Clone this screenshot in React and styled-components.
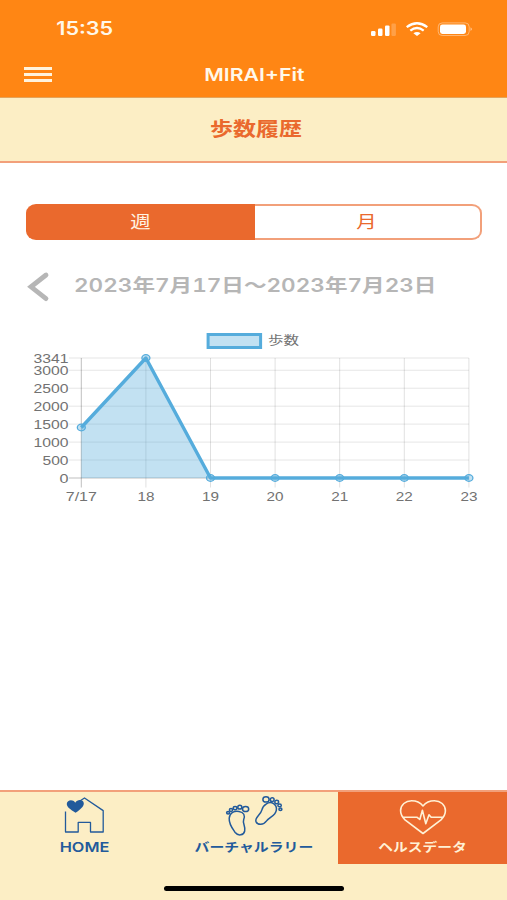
import React, { useState } from 'react';
import styled, { createGlobalStyle } from 'styled-components';

const COLORS = {
    header: '#ff8614',
    accent: '#ea692d',
    cream: '#fceec5',
    line: '#f2a07a',
    navy: '#225a9b',
    muted: '#b6b6b6',
    chart: '#55acdc',
    chartFill: 'rgba(85, 172, 220, 0.36)',
};

const STEPS = [
    { label: '7/17', value: 1406 },
    { label: '18', value: 3341 },
    { label: '19', value: 0 },
    { label: '20', value: 0 },
    { label: '21', value: 0 },
    { label: '22', value: 0 },
    { label: '23', value: 0 },
];

const TICKS = [
    { value: 3341, width: 35 },
    { value: 3000, width: 35 },
    { value: 2500, width: 35 },
    { value: 2000, width: 35 },
    { value: 1500, width: 35 },
    { value: 1000, width: 35 },
    { value: 500, width: 26 },
    { value: 0, width: 9 },
];

const CHART = { left: 81.3, top: 28, bottom: 148, step: 64.6, max: 3341 };

const px = index => CHART.left + index * CHART.step;
const py = value => CHART.bottom - (value / CHART.max) * (CHART.bottom - CHART.top);

const StatusBar = () => (
    <Status>
        <Wide $size={18} $weight={600} $stretch={1.2}>15:35</Wide>
        <StatusIcons width="104" height="18" viewBox="0 0 104 18" fill="#fff">
            <rect x="2" y="11" width="4.5" height="5" rx="1.2" />
            <rect x="9" y="8.6" width="4.5" height="7.4" rx="1.2" />
            <rect x="16" y="5.4" width="4.5" height="10.6" rx="1.2" />
            <rect x="22.4" y="3.5" width="4.5" height="12.5" rx="1.2" opacity="0.22" />
            <g fill="none" stroke="#fff" strokeWidth="2.3">
                <path d="M37.7 7.2Q48 -0.6 58.3 7.2" />
                <path d="M41.3 10.7Q48 5.4 54.7 10.7" />
            </g>
            <path d="M44.4 13.2Q48 10.8 51.6 13.2L48 16.1Z" />
            <rect x="69.2" y="2.9" width="31" height="12.6" rx="4" fill="none" stroke="#fff" opacity="0.4" />
            <rect x="71" y="4.4" width="26" height="9.5" rx="2.4" />
            <path d="M101.5 7.3Q104.5 9.2 101.5 11.1Z" opacity="0.5" />
        </StatusIcons>
    </Status>
);

const StepsChart = () => {
    const points = STEPS.map(({ value }, i) => `${px(i)},${py(value)}`);
    return (
        <Chart width="507" height="190" viewBox="0 0 507 190">
            <rect x="208.1" y="4.5" width="52.5" height="13" fill={COLORS.chartFill} stroke={COLORS.chart} strokeWidth="3" />
            <text x="268" y="15.3" textLength="31" lengthAdjust="spacingAndGlyphs">歩数</text>
            <g stroke="#000" strokeOpacity="0.12" strokeWidth="1">
                {TICKS.map(({ value }) => (
                    <line key={value} x1="69" x2={px(6)} y1={py(value)} y2={py(value)} strokeOpacity={value ? 0.1 : 0.25} />
                ))}
                {STEPS.map(({ label }, i) => (
                    <line key={label} x1={px(i)} x2={px(i)} y1={CHART.top} y2="157.5" strokeOpacity={i ? 0.12 : 0.25} />
                ))}
            </g>
            <polygon points={`${px(0)},${CHART.bottom} ${points.join(' ')}`} fill={COLORS.chartFill} />
            <polyline points={points.join(' ')} fill="none" stroke={COLORS.chart} strokeWidth="3.4" strokeLinejoin="round" />
            {STEPS.map(({ label, value }, i) => (
                <ellipse
                    key={label}
                    cx={px(i)}
                    cy={py(value)}
                    rx="4"
                    ry="3.3"
                    fill={COLORS.chartFill}
                    stroke={COLORS.chart}
                    strokeWidth="1.3"
                />
            ))}
            {TICKS.map(({ value, width }) => (
                <text key={value} x={68.5 - width} y={py(value) + 4.5} textLength={width} lengthAdjust="spacingAndGlyphs">
                    {value}
                </text>
            ))}
            {STEPS.map(({ label }, i) => {
                const width = i ? 17 : 31;
                return (
                    <text key={label} x={px(i) - width / 2} y="170.8" textLength={width} lengthAdjust="spacingAndGlyphs">
                        {label}
                    </text>
                );
            })}
        </Chart>
    );
};

const HomeIcon = () => (
    <svg width="42" height="38" viewBox="0 1 42 38">
        <path
            d="M1.5 14.5V35H14.2V25.4H26.5V35H39.2V13.6L20.5 1L13.5 5.5"
            fill="none"
            stroke={COLORS.navy}
            strokeWidth="1.3"
            strokeLinejoin="round"
        />
        <path d="M11.5 15.8C6.5 12.5 2.6 10 2.8 6.8C3.1 2.9 9 2 11.2 5.8C13.3 1.9 19.5 2.3 19.8 6.2C20 9.6 16.1 12.5 11.5 15.8Z" fill={COLORS.navy} />
    </svg>
);

const FeetIcon = () => (
    <svg width="60" height="42" viewBox="0 1 60 42" fill="none" stroke={COLORS.navy} strokeWidth="1.5">
        <path d="M5.2 21.3C5.6 15.2 10.5 13.7 15 14.4C20 15.2 21.2 18.5 19.7 22.5C18.2 26.3 21.8 29.5 20.7 34C19.7 38.5 14.1 39.2 11.2 35.5C8.7 32 4.8 27.4 5.2 21.3Z" />
        <ellipse cx="21.6" cy="12" rx="3.1" ry="2.6" />
        <ellipse cx="15.8" cy="10.2" rx="2" ry="1.9" />
        <ellipse cx="11.1" cy="11.1" rx="1.9" ry="1.7" />
        <ellipse cx="7" cy="13" rx="1.6" ry="1.4" />
        <ellipse cx="4.1" cy="15.8" rx="1.5" ry="1.2" />
        <path d="M42.4 6.8C47.4 3.2 53.4 7.9 52.3 13.4C51.4 18.9 45.9 19.8 42.6 23.9C39.4 28.3 33.6 28.3 32 24.6C30.4 20.6 36.7 18 37.9 12.9C38.6 9.9 39.9 8.3 42.4 6.8Z" />
        <ellipse cx="42" cy="2.4" rx="3.1" ry="2.6" />
        <ellipse cx="48.2" cy="2.7" rx="1.9" ry="1.9" />
        <ellipse cx="52.7" cy="5" rx="1.9" ry="1.7" />
        <ellipse cx="55.6" cy="8.4" rx="1.7" ry="1.4" />
        <ellipse cx="56.4" cy="12.2" rx="1.5" ry="1.2" />
    </svg>
);

const PulseIcon = () => (
    <svg width="48" height="36" viewBox="0 -1.3 48 36" fill="none" stroke="#fff1d5" strokeWidth="1.6" strokeLinejoin="round">
        <path d="M24 34.2L6 20.5C3 17.6 1.6 15 1.6 11.5C1.6 5.4 6.6 1.5 12.6 1.5C18.2 1.5 21.5 3.6 24 6.6C26.5 3.6 29.8 1.5 35.4 1.5C41.4 1.5 46.4 5.4 46.4 11.5C46.4 15 45 17.6 42 20.5Z" />
        <path d="M4.5 18H18.2L20.8 20.2L23.4 11L26.8 24.4L30 15.4L32.2 18H43.5" strokeLinecap="round" />
    </svg>
);

const App = () => {
    const [range, setRange] = useState('week');

    return (
        <Screen>
            <GlobalStyle />
            <Header>
                <StatusBar />
                <TitleBar>
                    <MenuButton aria-label="menu">
                        <MenuLine />
                        <MenuLine />
                        <MenuLine />
                    </MenuButton>
                    <Wide $size={17.5} $weight={600} $stretch={1.21}>MIRAI+Fit</Wide>
                </TitleBar>
            </Header>
            <SubHeader>
                <Wide $size={19} $weight={700} $stretch={1.21}>歩数履歴</Wide>
            </SubHeader>
            <Main>
                <Segments>
                    <Segment $active={range === 'week'} onClick={() => setRange('week')}>
                        <Wide $size={17} $stretch={1.2}>週</Wide>
                    </Segment>
                    <Segment $active={range === 'month'} onClick={() => setRange('month')}>
                        <Wide $size={17} $stretch={1.2}>月</Wide>
                    </Segment>
                </Segments>
                <Period>
                    <svg width="22" height="30" viewBox="0 0 22 30" fill="none" stroke={COLORS.muted} strokeWidth="4.8">
                        <path d="M19 4L4 15.8L19 27.6" strokeLinecap="round" />
                    </svg>
                    <Wide $size={18.5} $weight={600} $stretch={1.22} $origin="left">2023年7月17日〜2023年7月23日</Wide>
                </Period>
                <StepsChart />
            </Main>
            <Footer>
                <Tabs>
                    <Tab>
                        <HomeIcon />
                        <Wide $size={13.5} $weight={600} $stretch={1.21}>HOME</Wide>
                    </Tab>
                    <Tab>
                        <FeetIcon />
                        <Wide $size={12.5} $weight={700} $stretch={1.19}>バーチャルラリー</Wide>
                    </Tab>
                    <Tab $active>
                        <PulseIcon />
                        <Wide $size={12.5} $weight={700} $stretch={1.18}>ヘルスデータ</Wide>
                    </Tab>
                </Tabs>
                <HomeIndicator />
            </Footer>
        </Screen>
    );
};

const GlobalStyle = createGlobalStyle`
    * {
        box-sizing: border-box;
    }
    body {
        margin: 0;
        background: #fff;
        font-family: Inter, "Noto Sans CJK JP", sans-serif;
    }
    button {
        font: inherit;
        border: none;
        padding: 0;
        background: none;
    }
    svg {
        overflow: visible;
    }
`

const Screen = styled.div`
    display: flex;
    flex-direction: column;
    width: 507px;
    height: 900px;
    overflow: hidden;
`

const Wide = styled.span`
    display: inline-block;
    font-size: ${({ $size }) => $size}px;
    font-weight: ${({ $weight = 400 }) => $weight};
    line-height: 1.2;
    white-space: nowrap;
    transform: scaleX(${({ $stretch }) => $stretch});
    transform-origin: ${({ $origin = 'center' }) => $origin};
`

const Header = styled.header`
    height: 98px;
    background: ${COLORS.header};
    border-bottom: 1px solid #e3a45c;
    color: #fff8ea;
`

const Status = styled.div`
    display: flex;
    justify-content: space-between;
    align-items: center;
    height: 58px;
    padding: 0 34px 0 61px;
`

const StatusIcons = styled.svg`
    display: block;
`

const TitleBar = styled.div`
    display: grid;
    grid-template-columns: 76px 1fr 74px;
    align-items: center;
    justify-items: center;
    height: 33px;
`

const MenuButton = styled.button`
    display: flex;
    flex-direction: column;
    gap: 3.4px;
    width: 28px;
`

const MenuLine = styled.span`
    height: 3px;
    background: #fff3dd;
`

const SubHeader = styled.div`
    display: flex;
    justify-content: center;
    align-items: center;
    height: 65px;
    padding: 1px 0 0 6px;
    background: ${COLORS.cream};
    border-bottom: 2px solid ${COLORS.line};
    color: ${COLORS.accent};
`

const Main = styled.main`
    flex: 1;
    padding-top: 41px;
`

const Segments = styled.div`
    display: grid;
    grid-template-columns: 229px 1fr;
    height: 36px;
    margin: 0 25px 0 26px;
`

const Segment = styled.button`
    padding-right: 3px;
    color: ${({ $active }) => $active ? '#fff3e2' : COLORS.accent};
    background: ${({ $active }) => $active ? COLORS.accent : '#fff'};
    border: 2px solid ${({ $active }) => $active ? COLORS.accent : COLORS.line};

    &:first-child {
        border-right: none;
        border-radius: 10px 0 0 10px / 9px 0 0 9px;
    }
    &:last-child {
        border-left: none;
        border-radius: 0 10px 10px 0 / 0 9px 9px 0;
    }
`

const Period = styled.div`
    display: flex;
    align-items: center;
    gap: 25px;
    height: 91px;
    margin-bottom: -1px;
    padding-left: 27px;
    color: ${COLORS.muted};
    font-variant-numeric: tabular-nums;
`

const Chart = styled.svg`
    display: block;

    text {
        font-family: "Liberation Sans", "Noto Sans CJK JP", sans-serif;
        font-size: 12.5px;
        fill: #727272;
    }
`

const Footer = styled.footer`
    display: flex;
    flex-direction: column;
    justify-content: space-between;
    align-items: center;
    height: 110px;
    padding-bottom: 9px;
    background: ${COLORS.cream};
    border-top: 2px solid ${COLORS.line};
`

const Tabs = styled.nav`
    display: grid;
    grid-template-columns: 169px 169px 169px;
    height: 72px;
`

const Tab = styled.button`
    display: flex;
    flex-direction: column;
    align-items: center;
    justify-content: space-between;
    padding: 6px 0 9px;
    color: ${({ $active }) => $active ? '#fff1d5' : COLORS.navy};
    background: ${({ $active }) => $active ? COLORS.accent : 'transparent'};
`

const HomeIndicator = styled.div`
    width: 180px;
    height: 5px;
    border-radius: 3px;
    background: #000;
`

export default App
